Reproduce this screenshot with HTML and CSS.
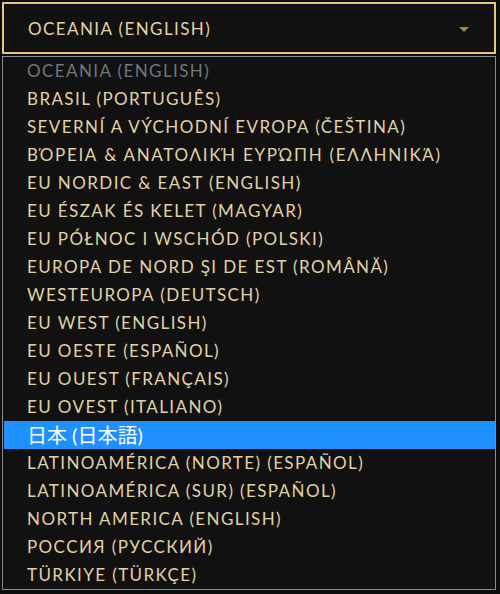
FILE: index.html
```html
<!DOCTYPE html>
<html lang="en">
<head>
    <meta charset="UTF-8">
    <meta name="viewport" content="width=device-width, initial-scale=1.0">
    <title>Region</title>
    <link rel="stylesheet" href="styles.css">
</head>
<body>
    <div class="picker">
        <div class="picker-field">
            <span class="picker-value">OCEANIA (ENGLISH)</span>
            <span class="picker-arrow"></span>
        </div>
        <ul class="picker-list">
            <li class="option disabled">OCEANIA (ENGLISH)</li>
            <li class="option">BRASIL (PORTUGUÊS)</li>
            <li class="option">SEVERNÍ A VÝCHODNÍ EVROPA (ČEŠTINA)</li>
            <li class="option greek">ΒΌΡΕΙΑ &amp; ΑΝΑΤΟΛΙΚΉ ΕΥΡΏΠΗ (ΕΛΛΗΝΙΚΆ)</li>
            <li class="option">EU NORDIC &amp; EAST (ENGLISH)</li>
            <li class="option">EU ÉSZAK ÉS KELET (MAGYAR)</li>
            <li class="option">EU PÓŁNOC I WSCHÓD (POLSKI)</li>
            <li class="option">EUROPA DE NORD ŞI DE EST (ROMÂNĂ)</li>
            <li class="option">WESTEUROPA (DEUTSCH)</li>
            <li class="option">EU WEST (ENGLISH)</li>
            <li class="option">EU OESTE (ESPAÑOL)</li>
            <li class="option">EU OUEST (FRANÇAIS)</li>
            <li class="option">EU OVEST (ITALIANO)</li>
            <li class="option active cjk">日本 (日本語)</li>
            <li class="option">LATINOAMÉRICA (NORTE) (ESPAÑOL)</li>
            <li class="option">LATINOAMÉRICA (SUR) (ESPAÑOL)</li>
            <li class="option">NORTH AMERICA (ENGLISH)</li>
            <li class="option">РОССИЯ (РУССКИЙ)</li>
            <li class="option">TÜRKIYE (TÜRKÇE)</li>
        </ul>
    </div>
</body>
</html>
```

FILE: styles.css
```css
body {
    margin: 0;
    padding: 2px 4px 0 2px;
    background: #0d0d0d;
    font-family: Lato, "Noto Sans CJK JP", sans-serif;
    font-size: 17px;
    letter-spacing: 1.4px;
}
.picker {
    display: flex;
    flex-direction: column;
    gap: 2px;
}
.picker-field {
    height: 48px;
    border: 2px solid #e6c77a;
    background: #111111;
    display: flex;
    align-items: center;
    justify-content: space-between;
    padding: 0 25px 0 24px;
}
.picker-value {
    color: #e2d1a6;
}
.picker-arrow {
    width: 0;
    height: 0;
    border-left: 5px solid transparent;
    border-right: 5px solid transparent;
    border-top: 5px solid #a58245;
    margin-top: 2px;
}
.picker-list {
    list-style: none;
    margin: 0;
    padding: 0 0 0 1px;
    border: 1px solid #8c8c8c;
    background: #111111;
}
.option {
    height: 28px;
    line-height: 28px;
    padding-left: 23px;
    color: #e2d1a6;
    white-space: nowrap;
}
.option.greek {
    letter-spacing: 1.7px;
}
.option.disabled {
    color: #6d777c;
}
.option.active {
    background: #1e90ff;
    color: #ffffff;
}
.option.cjk {
    font-size: 20px;
    letter-spacing: 0;
}
```
